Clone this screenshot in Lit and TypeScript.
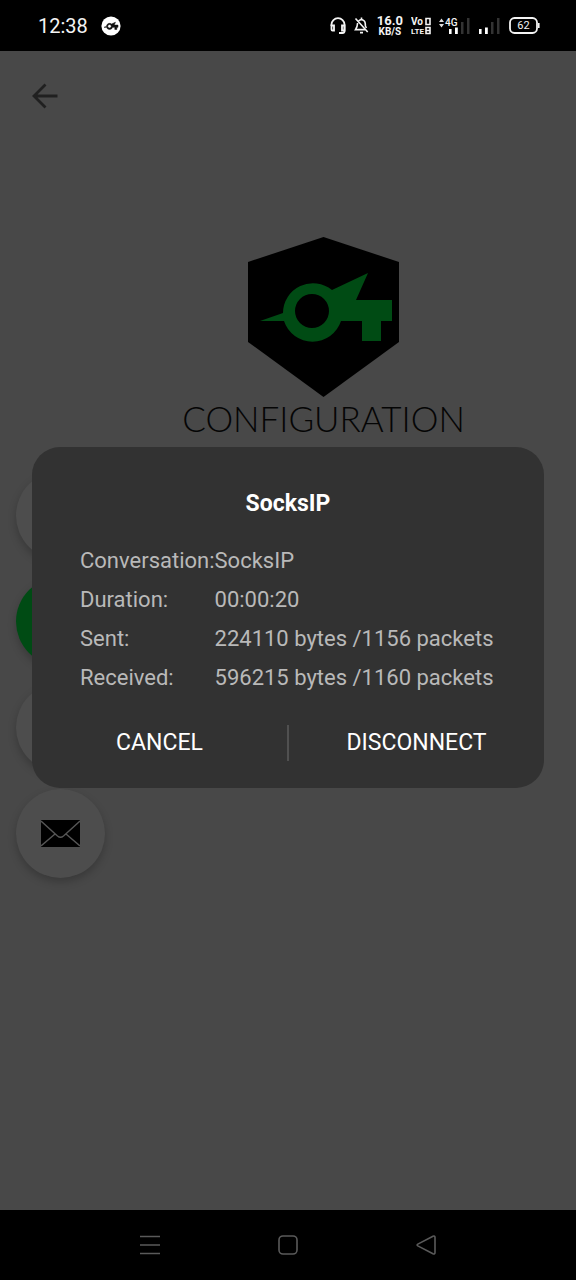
import { LitElement, html, css, svg } from "lit";
import { customElement, state } from "lit/decorators.js";

const birdKey = svg`
  <path d="M0 37 L23 29 A30 30 0 0 1 72 6 L108 -11 L96 16 H132 V37 H121 V57 H102 V37 H81 A30 30 0 0 1 24 37 Z M52 10 A17 17 0 1 0 52 44 A17 17 0 1 0 52 10 Z" fill-rule="evenodd"/>
`;

@customElement("status-bar")
export class StatusBar extends LitElement {
  static styles = css`
    :host {
      display: flex;
      align-items: center;
      height: 51px;
      padding: 0 36px 0 38px;
      background: #000;
      color: #f4f4f4;
      font-family: Roboto, sans-serif;
    }
    svg { display: block; flex: none; }
    .clock { font-size: 20px; line-height: 24px; margin-right: 13px; }
    .right { display: flex; align-items: center; gap: 8px; margin-left: auto; }
    .speed {
      display: flex;
      flex-direction: column;
      align-items: center;
      font-weight: 700;
    }
    .rate { font-size: 13px; line-height: 12px; }
    .unit { font-size: 10px; line-height: 10px; }
    .label { font-family: Roboto, sans-serif; fill: #f4f4f4; }
  `;

  render() {
    return html`
      <span class="clock">12:38</span>
      <svg width="20" height="20" viewBox="0 0 20 20">
        <circle cx="10" cy="10" r="9.6" fill="#fff" />
        <g transform="translate(3 7.4) scale(.106)" fill="#111" stroke="#111" stroke-width="5">${birdKey}</g>
      </svg>
      <div class="right">
        <svg width="16" height="17" viewBox="0 0 16 17" fill="none" stroke="#f4f4f4" stroke-width="1.8">
          <path d="M1.5 9 V7.5 A6.5 6.3 0 0 1 14.5 7.5 V14 Q14.5 16 12.5 16 H9" />
          <path d="M1.5 8.5 H4 V13.5 H2.5 Q1.5 13.5 1.5 12.5 Z M14.5 8.5 H12 V13.5 H14.5 Z" />
        </svg>
        <svg width="15" height="17" viewBox="0 0 15 17" fill="none" stroke="#f4f4f4" stroke-width="1.6">
          <path d="M4.5 4 Q7.5 1.4 10.3 4 Q11.4 5 11.4 9 L12.4 11 M3.6 6 Q3.5 9.5 1.5 12.6 H11" />
          <path d="M7.5 .5 V2.5 M6 15.6 H9 M1.5 1.5 L13.7 15" />
        </svg>
        <div class="speed"><span class="rate">16.0</span><span class="unit">KB/S</span></div>
        <svg width="20" height="18" viewBox="0 0 20 18">
          <text class="label" x="0" y="8" font-size="10" font-weight="700">Vo</text>
          <text class="label" x="0" y="17" font-size="8" font-weight="700">LTE</text>
          <path d="M15 1.5 H19 V7.5 H15 Z M15 10.5 H19 V16.5 H15 Z M15.5 13.5 H18.5" fill="none" stroke="#f4f4f4" stroke-width="1.6" />
        </svg>
        <svg width="31" height="18" viewBox="0 0 31 18">
          <path d="M0 5 L2.5 1.5 L5 5 Z M0 7 L2.5 10.5 L5 7 Z" fill="#ddd" />
          <path d="M22 5 H24.5 V17 H22 Z M28 1 H30.5 V17 H28 Z" fill="#333" />
          <path d="M10 12 H12.6 V17 H10 Z M16 10.5 H18.8 V17 H16 Z" fill="#fff" />
          <text class="label" x="6" y="9" font-size="10" font-weight="500">4G</text>
        </svg>
        <svg width="23" height="18" viewBox="0 0 23 18">
          <path d="M13 5 H15.5 V17 H13 Z M19 1 H21.5 V17 H19 Z" fill="#333" />
          <path d="M1 12 H3.6 V17 H1 Z M7 10.5 H9.8 V17 H7 Z" fill="#fff" />
        </svg>
        <svg width="31" height="17" viewBox="0 0 31 17">
          <rect x="1" y="1" width="27" height="15" rx="4.5" fill="none" stroke="#f4f4f4" stroke-width="1.8" />
          <path d="M29.8 6 V11" stroke="#f4f4f4" stroke-width="1.6" />
          <text class="label" x="14.5" y="12.4" font-size="11" text-anchor="middle">62</text>
        </svg>
      </div>
    `;
  }
}

@customElement("session-dialog")
export class SessionDialog extends LitElement {
  static styles = css`
    :host {
      display: block;
      width: 100%;
      box-sizing: border-box;
      padding: 42px 0 27px;
      border-radius: 28px;
      background: #323232;
      color: #fff;
      font-family: Roboto, sans-serif;
    }
    .title {
      margin: 0 0 22px;
      text-align: center;
      font-size: 23px;
      line-height: 30px;
      font-weight: 700;
    }
    .stats {
      margin: 0 48px 28px;
      border-collapse: collapse;
      color: #b9b9b9;
      font-size: 22px;
      line-height: 39px;
      white-space: nowrap;
    }
    .stats th, .stats td { padding: 0; text-align: left; font-weight: 400; }
    .actions { display: flex; }
    .action {
      flex: 1 1 0;
      height: 36px;
      padding: 0;
      border: 0;
      background: none;
      color: #fff;
      font: 400 23px/36px Roboto, sans-serif;
      cursor: pointer;
    }
    .action + .action { border-left: 2px solid #505050; }
  `;

  @state() private rows = [
    ["Conversation:", "SocksIP"],
    ["Duration:", "00:00:20"],
    ["Sent:", "224110 bytes /1156 packets"],
    ["Received:", "596215 bytes /1160 packets"],
  ];

  render() {
    return html`
      <h2 class="title">SocksIP</h2>
      <table class="stats">
        ${this.rows.map(([k, v]) => html`<tr><th scope="row">${k}</th><td>${v}</td></tr>`)}
      </table>
      <div class="actions">
        <button class="action" type="button">CANCEL</button>
        <button class="action" type="button">DISCONNECT</button>
      </div>
    `;
  }
}

@customElement("app-root")
export class AppRoot extends LitElement {
  static styles = css`
    :host {
      display: flex;
      flex-direction: column;
      min-height: 100vh;
      background: #000;
      font-family: Roboto, sans-serif;
    }
    svg { display: block; }
    .screen {
      position: relative;
      flex: 1;
      background: #484848;
    }
    .back, .fab, .nav-key {
      display: grid;
      place-items: center;
      padding: 0;
      border: 0;
      background: none;
      cursor: pointer;
    }
    .back { width: 90px; height: 90px; }
    .brand {
      display: flex;
      flex-direction: column;
      align-items: center;
      margin: 96px 0 0 71px;
    }
    .name {
      margin: 0;
      color: #050505;
      font: 300 35px/42px Lato, sans-serif;
    }
    .fabs {
      display: flex;
      flex-direction: column;
      gap: 17px;
      padding: 32px 16px;
    }
    .fab {
      width: 89px;
      height: 89px;
      border-radius: 50%;
      background: #4d4d4d;
      box-shadow: 0 4px 8px rgba(0, 0, 0, 0.22);
    }
    .active { background: #004b14; }
    .overlay {
      position: absolute;
      inset: 0;
      display: flex;
      align-items: center;
      padding: 0 32px 26px;
    }
    .nav {
      display: flex;
      justify-content: center;
      gap: 48px;
      height: 70px;
    }
    .nav-key { width: 90px; height: 70px; }
  `;

  render() {
    return html`
      <status-bar></status-bar>
      <main class="screen">
        <button class="back" type="button" aria-label="Back">
          <svg width="26" height="26" viewBox="0 0 26 26" fill="none" stroke="#202020" stroke-width="2.8">
            <path d="M13.5 1.5 L2 13 L13.5 24.5 M2 13 H25.5" />
          </svg>
        </button>
        <div class="brand">
          <svg width="151" height="160" viewBox="0 0 151 160">
            <path d="M75.5 0 L151 25 V105 L75.5 160 L0 105 V25 Z" fill="#000" />
            <g transform="translate(12 47)" fill="#004b14">${birdKey}</g>
          </svg>
          <h1 class="name">CONFIGURATION</h1>
        </div>
        <div class="fabs">
          <button class="fab" type="button" aria-label="Profile"></button>
          <button class="fab active" type="button" aria-label="Connect"></button>
          <button class="fab" type="button" aria-label="Settings"></button>
          <button class="fab" type="button" aria-label="Mail">
            <svg width="39" height="27" viewBox="0 0 39 27">
              <rect width="39" height="27" fill="#000" />
              <path d="M0 1 L16.5 16 Q19.5 18.6 22.5 16 L39 1 M0 26 L14 14 M39 26 L25 14" fill="none" stroke="#565656" stroke-width="1.4" />
            </svg>
          </button>
        </div>
        <div class="overlay">
          <session-dialog role="dialog" aria-label="SocksIP"></session-dialog>
        </div>
      </main>
      <nav class="nav">
        <button class="nav-key" type="button" aria-label="Recent apps">
          <svg width="20" height="20" viewBox="0 0 20 20" stroke="#5a5a5a" stroke-width="1.6">
            <path d="M0 1.5 H20 M0 10 H20 M0 18.5 H20" />
          </svg>
        </button>
        <button class="nav-key" type="button" aria-label="Home">
          <svg width="20" height="20" viewBox="0 0 20 20" fill="none" stroke="#5a5a5a" stroke-width="1.6">
            <rect x="1" y="1" width="18" height="18" rx="4" />
          </svg>
        </button>
        <button class="nav-key" type="button" aria-label="Back">
          <svg width="20" height="20" viewBox="0 0 20 20" fill="none" stroke="#5a5a5a" stroke-width="1.6" stroke-linejoin="round">
            <path d="M1.8 9.1 L17 1.2 Q19 .6 19 2.5 V17.5 Q19 19.4 17 18.8 L1.8 10.9 Q.4 10 1.8 9.1 Z" />
          </svg>
        </button>
      </nav>
    `;
  }
}
